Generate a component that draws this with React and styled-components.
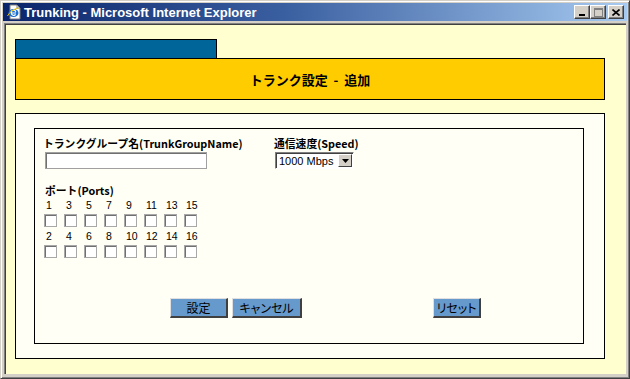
import React from "react";
import styled, { createGlobalStyle } from "styled-components";

const GlobalStyle = createGlobalStyle`
  html, body {
    margin: 0;
    padding: 0;
    background: #d4d0c8;
  }
  body {
    font-family: "Noto Sans CJK JP", "Liberation Sans", sans-serif;
  }
`;

const jp = `"Noto Sans CJK JP", "Liberation Sans", sans-serif`;

const Window = styled.div`
  width: 630px;
  height: 379px;
  box-sizing: border-box;
  display: flex;
  flex-direction: column;
  background: #d4d0c8;
  border-left: 1px solid #d4d0c8;
  border-top: 1px solid #d4d0c8;
  border-right: 1px solid #404040;
  border-bottom: 1px solid #404040;
  box-shadow: inset 1px 1px 0 #ffffff, inset -1px -1px 0 #808080;
  padding: 0 3px 4px 3px;
`;

const TitleBar = styled.div`
  height: 18px;
  margin: 2px -1px 0;
  display: flex;
  align-items: center;
  padding: 0 3px 0 3px;
  background: linear-gradient(90deg, #0a246a 0%, #3a5fa0 45%, #a6caf0 100%);
  color: #fff;
`;

const Title = styled.span`
  margin-left: 2px;
  font-family: "Liberation Sans", "DejaVu Sans", sans-serif;
  font-weight: bold;
  font-size: 13px;
  flex: 1;
`;

const Controls = styled.div`
  display: flex;
  align-items: center;
`;

const CtrlButton = styled.div`
  width: 16px;
  height: 14px;
  box-sizing: border-box;
  margin-left: ${(p) => (p.$gap ? "2px" : "0")};
  background: #d4d0c8;
  border-top: 1px solid #ffffff;
  border-left: 1px solid #ffffff;
  border-right: 1px solid #404040;
  border-bottom: 1px solid #404040;
  box-shadow: inset -1px -1px 0 #808080;
  display: flex;
  align-items: center;
  justify-content: center;
`;

const Content = styled.div`
  flex: 1;
  margin-top: 2px;
  background: #ffffd0;
  border-top: 1px solid #808080;
  border-left: 1px solid #808080;
  box-shadow: inset 1px 1px 0 #404040;
  padding: 15px 21px 15px 10px;
  display: flex;
  flex-direction: column;
`;

const Tab = styled.div`
  width: 202px;
  height: 19px;
  box-sizing: border-box;
  background: #006699;
  border: 1px solid #000;
  border-bottom: none;
`;

const Header = styled.div`
  height: 42px;
  box-sizing: border-box;
  background: #ffcc00;
  border: 1px solid #000;
  display: flex;
  align-items: center;
  justify-content: center;
  font-family: ${jp};
  font-weight: bold;
  font-size: 13px;
  color: #000;
  padding-top: 1px;
  word-spacing: 3px;
`;

const OuterBox = styled.div`
  margin-top: 13px;
  height: 246px;
  box-sizing: border-box;
  background: #fffff5;
  border: 1px solid #000;
  padding: 14px 20px 14px 18px;
  display: flex;
`;

const InnerBox = styled.div`
  flex: 1;
  border: 1px solid #000;
  padding: 8px 0 0 8px;
  display: flex;
  flex-direction: column;
`;

const FieldsRow = styled.div`
  display: flex;
`;

const Field = styled.div`
  width: ${(p) => p.$w}px;
  display: flex;
  flex-direction: column;
`;

const Label = styled.div`
  font-family: ${jp};
  font-weight: bold;
  font-size: 10.8px;
  line-height: 13px;
  height: 15px;
  color: #000;
`;

const TextBox = styled.div`
  margin-left: 2px;
  width: 162px;
  height: 17px;
  box-sizing: border-box;
  background: #fff;
  border: 1px solid #a0a0a0;
  box-shadow: inset 1px 1px 0 #707070;
`;

const Select = styled.div`
  margin-left: 1px;
  width: 79px;
  height: 17px;
  box-sizing: border-box;
  background: #fff;
  border-top: 1px solid #808080;
  border-left: 1px solid #808080;
  border-right: 1px solid #fff;
  border-bottom: 1px solid #fff;
  box-shadow: inset 1px 1px 0 #404040;
  display: flex;
  align-items: center;
  font-family: "Liberation Sans", sans-serif;
  font-size: 11px;
  padding-left: 3px;
  position: relative;
`;

const SelectArrow = styled.div`
  position: absolute;
  right: 1px;
  top: 1px;
  width: 14px;
  height: 13px;
  box-sizing: border-box;
  background: #d4d0c8;
  border-top: 1px solid #fff;
  border-left: 1px solid #fff;
  border-right: 1px solid #404040;
  border-bottom: 1px solid #404040;
  display: flex;
  align-items: center;
  justify-content: center;
`;

const PortsBlock = styled.div`
  margin-top: 15px;
  margin-left: 2px;
  display: flex;
  flex-direction: column;
`;

const PortGrid = styled.div`
  display: grid;
  grid-template-columns: repeat(8, 20px);
`;

const PortNum = styled.span`
  font-family: "Liberation Sans", sans-serif;
  font-size: 10.5px;
  line-height: 12px;
  height: 13px;
  padding-left: 1px;
  color: #000;
`;

const Check = styled.span`
  width: 13px;
  height: 13px;
  box-sizing: border-box;
  margin: 2px 0 3px -1px;
  background: #fff;
  border: 1px solid #a8a8a8;
  box-shadow: inset 1px 1px 0 #707070;
`;

const ButtonRow = styled.div`
  margin-top: 37px;
  display: flex;
  padding-left: 127px;
`;

const Button = styled.button`
  width: ${(p) => p.$w}px;
  height: 20px;
  margin-left: ${(p) => p.$ml || 0}px;
  padding: 0;
  box-sizing: border-box;
  background: #6699cc;
  border-top: 1px solid #e0e0e0;
  border-left: 1px solid #e0e0e0;
  border-right: 2px solid #404040;
  border-bottom: 2px solid #404040;
  font-family: ${jp};
  font-feature-settings: "palt";
  font-size: 12px;
  line-height: 16px;
  color: #000;
`;

const IeIcon = () => (
  <svg width="16" height="16" viewBox="0 0 16 16">
    <path d="M4 1h7l3 3v11H4z" fill="#fff" stroke="#808080" />
    <path d="M11 1v3h3" fill="none" stroke="#808080" />
    <ellipse cx="7.5" cy="9" rx="5" ry="4" fill="#1a6fd0" />
    <path d="M5 9h5M5.3 9a2.3 2.3 0 0 1 4.5 -1M5.3 9a2.4 2.4 0 0 0 4.3 1.4" fill="none" stroke="#fff" strokeWidth="1.2" />
    <path d="M1.5 12c2-4 6-7 11-8" fill="none" stroke="#f0c000" strokeWidth="1" />
  </svg>
);

const odd = [1, 3, 5, 7, 9, 11, 13, 15];
const even = [2, 4, 6, 8, 10, 12, 14, 16];

const PortRow = ({ nums }) => (
  <>
    <PortGrid>
      {nums.map((n) => (
        <PortNum key={n}>{n}</PortNum>
      ))}
    </PortGrid>
    <PortGrid>
      {nums.map((n) => (
        <Check key={n} />
      ))}
    </PortGrid>
  </>
);

export default function App() {
  return (
    <>
      <GlobalStyle />
      <Window>
        <TitleBar>
          <IeIcon />
          <Title>Trunking - Microsoft Internet Explorer</Title>
          <Controls>
            <CtrlButton>
              <svg width="8" height="8" viewBox="0 0 8 8">
                <rect x="1" y="6" width="6" height="2" fill="#000" />
              </svg>
            </CtrlButton>
            <CtrlButton>
              <svg width="9" height="9" viewBox="0 0 9 9">
                <rect x="0.5" y="0.5" width="8" height="8" fill="none" stroke="#808080" />
                <rect x="0.5" y="0.5" width="8" height="1.5" fill="#808080" />
              </svg>
            </CtrlButton>
            <CtrlButton $gap>
              <svg width="8" height="7" viewBox="0 0 8 7">
                <path d="M0.5 0.5L7.5 6.5M7.5 0.5L0.5 6.5" stroke="#000" strokeWidth="1.6" />
              </svg>
            </CtrlButton>
          </Controls>
        </TitleBar>
        <Content>
          <Tab />
          <Header>トランク設定 - 追加</Header>
          <OuterBox>
            <InnerBox>
              <FieldsRow>
                <Field $w={231}>
                  <Label>トランクグループ名(TrunkGroupName)</Label>
                  <TextBox />
                </Field>
                <Field $w={120}>
                  <Label>通信速度(Speed)</Label>
                  <Select>
                    1000 Mbps
                    <SelectArrow>
                      <svg width="7" height="4" viewBox="0 0 7 4">
                        <path d="M0 0h7L3.5 4z" fill="#000" />
                      </svg>
                    </SelectArrow>
                  </Select>
                </Field>
              </FieldsRow>
              <PortsBlock>
                <Label>ポート(Ports)</Label>
                <PortRow nums={odd} />
                <PortRow nums={even} />
              </PortsBlock>
              <ButtonRow>
                <Button $w={58}>設定</Button>
                <Button $w={70} $ml={4}>キャンセル</Button>
                <Button $w={48} $ml={131}>リセット</Button>
              </ButtonRow>
            </InnerBox>
          </OuterBox>
        </Content>
      </Window>
    </>
  );
}
